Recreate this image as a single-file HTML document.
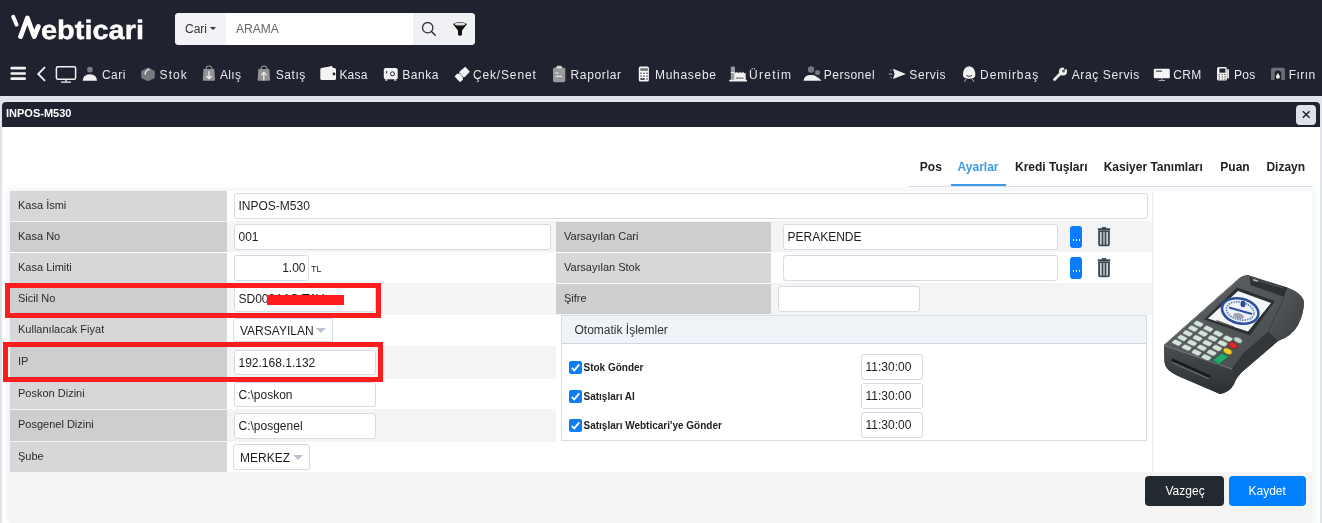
<!DOCTYPE html>
<html><head><meta charset="utf-8"><style>
*{box-sizing:border-box;margin:0;padding:0}
html,body{width:1322px;height:523px;overflow:hidden;background:#e0e3e9;font-family:"Liberation Sans",sans-serif;position:relative}
.a{position:absolute}
.t{position:absolute;white-space:nowrap;line-height:1}
.mi{position:absolute;top:68.5px;font-size:12px;line-height:12px;color:#e9e9ea;white-space:nowrap}
.lab{position:absolute;font-size:11px;line-height:11px;color:#2a2a2a;white-space:nowrap}
.inp{position:absolute;background:#fff;border:1px solid #d5dbe3;border-radius:3px}
.it{position:absolute;font-size:12px;line-height:12px;color:#1e1e1e;white-space:nowrap}
.L1{background:#d7d7da}
.L2{background:#cecdd0}
.G{background:#f4f4f4}
.W{background:#fff}
.tab{position:absolute;top:161px;font-size:12px;line-height:12px;font-weight:bold;color:#222;white-space:nowrap}
.red{position:absolute;border:4.8px solid #ff1c1c}
.cbt{position:absolute;font-size:10px;line-height:10px;font-weight:bold;color:#1e1e1e;white-space:nowrap}
</style></head><body>
<div id="root" style="position:absolute;left:0;top:0;width:1322px;height:523px;overflow:hidden;will-change:transform">
<div class="a" style="left:0px;top:0px;width:1322px;height:96px;background:#20222f"></div>
<svg class="a" style="left:0;top:0" width="160" height="50" viewBox="0 0 160 50">
<path d="M13.2 16.8 L16.6 24.6" stroke="#fff" stroke-width="3.9" stroke-linecap="round" fill="none"/>
<path d="M20.6 36.6 L27.4 18 L34.2 36.6 L38.3 26.5" stroke="#fff" stroke-width="4.8" stroke-linecap="round" stroke-linejoin="round" fill="none"/>
<text x="41" y="38.8" font-family="Liberation Sans" font-weight="bold" font-size="26.5" fill="#fff" stroke="#fff" stroke-width="0.4" textLength="103" lengthAdjust="spacingAndGlyphs" style="text-rendering:geometricPrecision">ebticari</text>
</svg>
<div class="a" style="left:175px;top:13px;width:300px;height:32px;background:#fff;border-radius:4px"></div>
<div class="a" style="left:175px;top:13px;width:51px;height:32px;background:#f2f2f7;border-radius:4px 0 0 4px"></div>
<div class="a" style="left:413px;top:13px;width:62px;height:32px;background:#f0f1f5;border-radius:0 4px 4px 0"></div>
<div class="t" style="left:185px;top:22.6px;font-size:12px;color:#333">Cari</div>
<div class="a" style="left:210px;top:27px;width:0;height:0;border-left:3px solid transparent;border-right:3px solid transparent;border-top:3px solid #333"></div>
<div class="t" style="left:236px;top:23px;font-size:12px;color:#666">ARAMA</div>
<svg class="a" style="left:418px;top:18px" width="24" height="22" viewBox="0 0 24 22">
<circle cx="9.7" cy="9.7" r="5.2" stroke="#333" stroke-width="1.3" fill="none"/>
<path d="M13.5 13.5 L17.2 17.3" stroke="#333" stroke-width="1.5" stroke-linecap="round"/>
</svg>
<svg class="a" style="left:450px;top:19px" width="20" height="20" viewBox="0 0 20 20">
<path d="M3 5 Q10 1 17 5 L12 11.5 L12 16 Q10 17.5 8 16 L8 11.5 Z" fill="#111"/>
<ellipse cx="10" cy="5" rx="5.3" ry="1.6" fill="#ddd"/>
</svg>
<div class="mi" style="left:101.9px;top:68.5px;letter-spacing:0.533px">Cari</div>
<div class="mi" style="left:159.6px;top:68.5px;letter-spacing:1.067px">Stok</div>
<div class="mi" style="left:220px;top:68.5px;letter-spacing:0.333px">Alış</div>
<div class="mi" style="left:275.8px;top:68.5px;letter-spacing:0.525px">Satış</div>
<div class="mi" style="left:339.4px;top:68.5px;letter-spacing:0.200px">Kasa</div>
<div class="mi" style="left:402.3px;top:68.5px;letter-spacing:0.500px">Banka</div>
<div class="mi" style="left:473px;top:68.5px;letter-spacing:0.838px">Çek/Senet</div>
<div class="mi" style="left:570.5px;top:68.5px;letter-spacing:0.643px">Raporlar</div>
<div class="mi" style="left:655px;top:68.5px;letter-spacing:0.700px">Muhasebe</div>
<div class="mi" style="left:749px;top:68.5px;letter-spacing:1.340px">Üretim</div>
<div class="mi" style="left:823.8px;top:68.5px;letter-spacing:0.486px">Personel</div>
<div class="mi" style="left:909.3px;top:68.5px;letter-spacing:0.580px">Servis</div>
<div class="mi" style="left:980px;top:68.5px;letter-spacing:0.971px">Demirbaş</div>
<div class="mi" style="left:1071.7px;top:68.5px;letter-spacing:0.630px">Araç Servis</div>
<div class="mi" style="left:1173.2px;top:68.5px;letter-spacing:0.400px">CRM</div>
<div class="mi" style="left:1234px;top:68.5px;letter-spacing:0.300px">Pos</div>
<div class="mi" style="left:1288.8px;top:68.5px;letter-spacing:0.400px">Fırın</div>
<svg class="a" style="left:0;top:0" width="1322" height="95" viewBox="0 0 1322 95">
<g fill="#f2f2f2">
<rect x="10.4" y="66.8" width="15.6" height="2.6" rx="1.2"/>
<rect x="10.4" y="72.2" width="15.6" height="2.6" rx="1.2"/>
<rect x="10.4" y="77.3" width="15.6" height="2.6" rx="1.2"/>
</g>
<path d="M45 67.2 L38.2 74 L45 80.8" stroke="#f2f2f2" stroke-width="1.8" fill="none"/>
<rect x="56.4" y="66.7" width="19.2" height="12.6" rx="1.5" stroke="#f2f2f2" stroke-width="1.5" fill="none"/>
<path d="M66 79.5 V82 M61 82.2 H71" stroke="#f2f2f2" stroke-width="1.3" fill="none"/>
<circle cx="89.9" cy="69.6" r="2.9" fill="#7b7c84"/>
<path d="M82.7 80.8 Q83 74.5 89.9 74.2 Q96.8 74.5 97 80.8 Z" fill="#f2f2f2"/>
<path d="M148 67.5 L154.8 71 L154.8 78 L148 81.2 L141.2 78 L141.2 71 Z" fill="#77787e"/>
<path d="M145 74.5 Q145 71 149.5 69" stroke="#f2f2f2" stroke-width="1.3" fill="none"/>
<path d="M206 69.5 Q206 66 209 66 Q212 66 212 69.5" stroke="#999" stroke-width="1.2" fill="none"/>
<path d="M203.5 69 H214.3 L215 80 Q215 80.8 214 80.8 H204 Q202.8 80.8 202.8 80 Z" fill="#939396"/>
<path d="M209 71 V78.5 M206.5 76 L209 78.7 L211.5 76" stroke="#f2f2f2" stroke-width="1.2" fill="none"/>
<path d="M261 69.5 Q261 66 264 66 Q267 66 267 69.5" stroke="#999" stroke-width="1.2" fill="none"/>
<path d="M258.3 69 H269.3 L270 80 Q270 80.8 269 80.8 H259 Q257.6 80.8 257.6 80 Z" fill="#939396"/>
<path d="M263.8 80.5 V72.5 M261.3 75 L263.8 72.3 L266.3 75" stroke="#f2f2f2" stroke-width="1.2" fill="none"/>
<path d="M321.5 68 L332 66 L333 68 H334.5 Q336 68 336 69.5 V78.5 Q336 80 334.5 80 H321.8 Q320.3 80 320.3 78.5 V69.5 Q320.3 68 321.5 68 Z" fill="#f4f4f4"/>
<circle cx="334" cy="74" r="1.4" fill="#20222f"/>
<rect x="383.8" y="67.9" width="13.9" height="11.4" rx="1.8" fill="#f4f4f4"/>
<rect x="385" y="79" width="2.5" height="1.8" fill="#bbb"/><rect x="394" y="79" width="2.5" height="1.8" fill="#bbb"/>
<rect x="386.2" y="71" width="0.9" height="2.5" fill="#20222f"/>
<circle cx="392.5" cy="73.8" r="2" stroke="#20222f" stroke-width="1" fill="none"/>
<path d="M465.3 66.7 L469.8 71.8 L464.6 77.2 Q463.2 76.6 462.6 78.2 Q463.5 79.2 462.6 80 L460 82.3 L454.6 76.4 L457.4 73.6 Q458.6 74.4 459.4 73.2 Q459 72.2 459.6 71.6 Z" fill="#f4f4f4"/>
<path d="M459.6 72.8 L463.6 78" stroke="#20222f" stroke-width="0.9" stroke-dasharray="1.2 0.9"/>
<rect x="553" y="67.5" width="12.3" height="14.8" rx="1.8" fill="#9a9a9d"/>
<rect x="556.5" y="65.8" width="5.3" height="2.8" rx="1.2" fill="#d8d8d8"/>
<rect x="555.5" y="72.5" width="3" height="1.1" fill="#eee"/><rect x="555.5" y="75.8" width="6.5" height="1.1" fill="#eee"/>
<rect x="638.8" y="66.4" width="10.1" height="15.1" rx="1.6" fill="#f4f4f4"/>
<rect x="640.3" y="68.3" width="7.6" height="2.5" fill="#6e6e74"/>
<g fill="#7a7a80"><rect x="640.1" y="72.5" width="1.8" height="1.5"/><rect x="643.1" y="72.5" width="1.8" height="1.5"/><rect x="646.1" y="72.5" width="1.8" height="1.5"/>
<rect x="640.1" y="75.4" width="1.8" height="1.5"/><rect x="643.1" y="75.4" width="1.8" height="1.5"/><rect x="646.1" y="75.4" width="1.8" height="1.5"/>
<rect x="646.1" y="78.3" width="1.8" height="1.5"/></g>
<rect x="640.1" y="78.3" width="4.8" height="1.5" rx="0.7" fill="#20222f"/>
<rect x="730.8" y="66.6" width="4.2" height="14" fill="#9c9ca0"/>
<rect x="730.8" y="72" width="4.2" height="1" fill="#f0f0f0"/>
<path d="M734.4 80.6 V73.2 L737.5 71.8 V73.2 L740.6 71.8 V73.2 L743.7 71.8 V73.2 L745.7 73 V80.6 Z" fill="#f2f2f2"/>
<rect x="736" y="77.4" width="7.6" height="1.5" fill="#8a8a90"/>
<rect x="729.2" y="79.8" width="17.8" height="1.7" rx="0.6" fill="#f2f2f2"/>
<circle cx="811" cy="69.5" r="3.2" fill="#75767e"/>
<circle cx="817.5" cy="72.5" r="2.6" fill="#75767e"/>
<path d="M803.6 80.8 Q804 75 811 75 Q818 75 818.4 80.8 Z" fill="#f2f2f2"/>
<path d="M817 76.5 L821.7 80.8 H818.5 Z" fill="#f2f2f2"/>
<path d="M893 68.7 L905.9 74 L893 79.1 L894.6 74 Z" fill="#f2f2f2"/>
<g fill="#888"><rect x="888.8" y="73.3" width="3.5" height="1.4"/><circle cx="891" cy="70.2" r="0.8"/><circle cx="891" cy="77.8" r="0.8"/></g>
<path d="M969.2 66.2 Q975.3 67 975.3 75 Q975.3 78.8 969.2 78.8 Q963 78.8 963 75 Q963 67 969.2 66.2 Z" fill="#f2f2f2"/>
<path d="M966.3 75.5 Q969.2 77.5 972 75.5" stroke="#20222f" stroke-width="0.9" fill="none"/>
<path d="M966 79 L964.5 81.8 M972.3 79 L973.8 81.8" stroke="#bbb" stroke-width="1"/>
<path d="M1054.5 79.5 L1060.5 73.5" stroke="#f2f2f2" stroke-width="2.8" stroke-linecap="round"/>
<circle cx="1063" cy="71.5" r="4" fill="#f2f2f2"/>
<circle cx="1063.5" cy="71" r="1.5" fill="#666"/>
<path d="M1063 66.5 L1066.5 67.5 L1065 70.5" fill="#20222f"/>
<rect x="1153.8" y="68.7" width="16" height="9.5" rx="1" fill="#f4f4f4"/>
<rect x="1156" y="70.6" width="6" height="1" fill="#20222f"/>
<path d="M1161.8 78.2 V80 M1158.5 80.5 H1165" stroke="#aaa" stroke-width="1"/>
<rect x="1217" y="67" width="9.9" height="13.6" rx="1.6" fill="#f2f2f2"/>
<rect x="1219.4" y="68.5" width="6" height="4.2" fill="#20222f"/>
<g fill="#555860"><rect x="1218.6" y="74" width="1.3" height="1.1"/><rect x="1221.6" y="74" width="1.3" height="1.1"/><rect x="1224.3" y="74" width="1.3" height="1.1"/>
<rect x="1218.6" y="76.3" width="1.3" height="1.1"/><rect x="1221.6" y="76.3" width="1.3" height="1.1"/><rect x="1224.3" y="76.3" width="1.3" height="1.1"/>
<rect x="1218.6" y="78.5" width="1.3" height="1.1"/><rect x="1221.6" y="78.5" width="1.3" height="1.1"/><rect x="1224.3" y="78.5" width="1.3" height="1.1"/></g>
<rect x="1227.2" y="69.3" width="1.8" height="9.2" fill="#e6e6e6"/>
<path d="M1271 80 V69.5 Q1271 67.8 1272.7 67.8 H1283.2 Q1284.9 67.8 1284.9 69.5 V80 H1281.3 V73.5 Q1281.3 70.4 1277.95 70.4 Q1274.6 70.4 1274.6 73.5 V80 Z" fill="#6d6d75"/>
<path d="M1277.9 72.9 Q1279.9 75.5 1279.9 77 Q1279.9 78.8 1277.9 78.8 Q1275.9 78.8 1275.9 77 Q1275.9 75.5 1277.9 72.9 Z" fill="#f2f2f2"/>
</svg>

<div class="a" style="left:2px;top:102px;width:1318px;height:421px;background:#fff;border-radius:4px 4px 0 0"></div>
<div class="a" style="left:2px;top:102px;width:1318px;height:25px;background:#20222f;border-radius:4px 4px 0 0"></div>
<div class="t" style="left:6px;top:107.5px;font-size:11px;font-weight:bold;color:#fff">INPOS-M530</div>
<div class="a" style="left:1296px;top:105px;width:20px;height:20px;background:#dee2ea;border-radius:4px"></div>
<svg class="a" style="left:1296px;top:105px" width="20" height="20" viewBox="0 0 20 20">
<path d="M6.8 6.2 L13.6 12.8 M13.6 6.2 L6.8 12.8" stroke="#222" stroke-width="1.5"/>
</svg>
<div class="a" style="left:908px;top:186px;width:405px;height:1px;background:#dde2ea"></div>
<div class="tab" style="left:919.8px;top:161px;color:#222">Pos</div>
<div class="tab" style="left:957.6px;top:161px;color:#3c9be6">Ayarlar</div>
<div class="tab" style="left:1015px;top:161px;color:#222">Kredi Tuşları</div>
<div class="tab" style="left:1103.7px;top:161px;color:#222">Kasiyer Tanımları</div>
<div class="tab" style="left:1220.3px;top:161px;color:#222">Puan</div>
<div class="tab" style="left:1266.4px;top:161px;color:#222">Dizayn</div>
<div class="a" style="left:951px;top:184px;width:55px;height:2px;background:#3c9be6"></div>
<div class="a" style="left:9px;top:191px;width:1303px;height:332px;background:#f4f4f4;box-shadow:0 0 9px rgba(70,90,140,0.13)"></div>
<div class="a" style="left:10px;top:191px;width:1142px;height:281px;background:#fff"></div>
<div class="a" style="left:10px;top:221px;width:546px;height:31px;background:#f4f4f4"></div>
<div class="a" style="left:10px;top:283px;width:546px;height:32px;background:#f4f4f4"></div>
<div class="a" style="left:10px;top:346px;width:546px;height:33px;background:#f4f4f4"></div>
<div class="a" style="left:10px;top:409px;width:546px;height:33px;background:#f4f4f4"></div>
<div class="a" style="left:556px;top:221px;width:596px;height:31px;background:#f4f4f4"></div>
<div class="a" style="left:556px;top:283px;width:596px;height:32px;background:#f4f4f4"></div>
<div class="a" style="left:10px;top:191px;width:217px;height:30px;background:#d7d7da"></div>
<div class="lab" style="left:18px;top:199.5px;">Kasa İsmi</div>
<div class="a" style="left:10px;top:222px;width:217px;height:30px;background:#cecdd0"></div>
<div class="lab" style="left:18px;top:230.5px;">Kasa No</div>
<div class="a" style="left:10px;top:253px;width:217px;height:30px;background:#d7d7da"></div>
<div class="lab" style="left:18px;top:261.5px;">Kasa Limiti</div>
<div class="a" style="left:10px;top:284px;width:217px;height:31px;background:#cecdd0"></div>
<div class="lab" style="left:18px;top:293.0px;">Sicil No</div>
<div class="a" style="left:10px;top:316px;width:217px;height:30px;background:#d7d7da"></div>
<div class="lab" style="left:18px;top:323.7px;">Kullanılacak Fiyat</div>
<div class="a" style="left:10px;top:347px;width:217px;height:32px;background:#cecdd0"></div>
<div class="lab" style="left:18px;top:355.7px;">IP</div>
<div class="a" style="left:10px;top:380px;width:217px;height:29px;background:#d7d7da"></div>
<div class="lab" style="left:18px;top:388.0px;">Poskon Dizini</div>
<div class="a" style="left:10px;top:410px;width:217px;height:31px;background:#cecdd0"></div>
<div class="lab" style="left:18px;top:419.0px;">Posgenel Dizini</div>
<div class="a" style="left:10px;top:442px;width:217px;height:30px;background:#d7d7da"></div>
<div class="lab" style="left:18px;top:450.5px;">Şube</div>
<div class="a" style="left:234px;top:193px;width:914px;height:26px;background:#fff;border:1px solid #d5dbe3;border-radius:3px"></div>
<div class="it" style="left:238.5px;top:200.0px;">INPOS-M530</div>
<div class="a" style="left:234px;top:224px;width:317px;height:26px;background:#fff;border:1px solid #d5dbe3;border-radius:3px"></div>
<div class="it" style="left:238.5px;top:231.0px;">001</div>
<div class="a" style="left:234px;top:255px;width:75px;height:26px;background:#fff;border:1px solid #d5dbe3;border-radius:3px"></div>
<div class="it" style="left:234px;width:71.5px;top:262.0px;text-align:right">1.00</div>
<div class="t" style="left:311px;top:265px;font-size:9px;color:#222">TL</div>
<div class="a" style="left:234px;top:286px;width:142px;height:26px;background:#fff;border:1px solid #d5dbe3;border-radius:3px"></div>
<div class="it" style="left:238.5px;top:293.0px;">SD003A1G/TAV</div>
<div class="a" style="left:267px;top:295px;width:77px;height:10px;background:#ff1c1c"></div>
<div class="a" style="left:233px;top:318px;width:100px;height:24px;background:#fff;border:1px solid #d5dbe3;border-radius:3px 0 0 3px"></div>
<div class="it" style="left:240px;top:324.5px;">VARSAYILAN</div>
<div class="a" style="left:315.5px;top:327.5px;width:0;height:0;border-left:5px solid transparent;border-right:5px solid transparent;border-top:5.5px solid #b9c3d1"></div>
<div class="a" style="left:234px;top:350px;width:142px;height:25px;background:#fff;border:1px solid #d5dbe3;border-radius:3px"></div>
<div class="it" style="left:238.5px;top:356.5px;">192.168.1.132</div>
<div class="a" style="left:234px;top:382px;width:142px;height:25px;background:#fff;border:1px solid #d5dbe3;border-radius:3px"></div>
<div class="it" style="left:238.5px;top:388.5px;">C:\poskon</div>
<div class="a" style="left:234px;top:413px;width:142px;height:26px;background:#fff;border:1px solid #d5dbe3;border-radius:3px"></div>
<div class="it" style="left:238.5px;top:420.0px;">C:\posgenel</div>
<div class="a" style="left:233px;top:444px;width:77px;height:26px;background:#fff;border:1px solid #d5dbe3;border-radius:3px"></div>
<div class="it" style="left:240px;top:451.5px;">MERKEZ</div>
<div class="a" style="left:292.5px;top:454.5px;width:0;height:0;border-left:5.3px solid transparent;border-right:5.3px solid transparent;border-top:5.3px solid #b9c3d1"></div>
<div class="a" style="left:556px;top:222px;width:215px;height:30px;background:#cecdd0"></div>
<div class="lab" style="left:564px;top:230.5px;">Varsayılan Cari</div>
<div class="a" style="left:556px;top:253px;width:215px;height:30px;background:#d7d7da"></div>
<div class="lab" style="left:564px;top:261.5px;">Varsayılan Stok</div>
<div class="a" style="left:556px;top:284px;width:215px;height:30px;background:#cecdd0"></div>
<div class="lab" style="left:564px;top:292.5px;">Şifre</div>
<div class="a" style="left:783px;top:224px;width:275px;height:26px;background:#fff;border:1px solid #d5dbe3;border-radius:3px"></div>
<div class="it" style="left:787.5px;top:231.0px;">PERAKENDE</div>
<div class="a" style="left:783px;top:255px;width:275px;height:26px;background:#fff;border:1px solid #d5dbe3;border-radius:3px"></div>
<div class="a" style="left:778px;top:286px;width:142px;height:26px;background:#fff;border:1px solid #d5dbe3;border-radius:3px"></div>
<div class="a" style="left:1070px;top:226px;width:12px;height:22px;background:#0a7cff;border-radius:3px"></div>
<div class="a" style="left:1072.5px;top:239px;width:1.900000000000091px;height:1.9000000000000057px;background:#fff"></div>
<div class="a" style="left:1075.5px;top:239px;width:1.900000000000091px;height:1.9000000000000057px;background:#fff"></div>
<div class="a" style="left:1078.5px;top:239px;width:1.900000000000091px;height:1.9000000000000057px;background:#fff"></div>
<svg class="a" style="left:1096px;top:226px" width="16" height="22" viewBox="0 0 16 22">
<rect x="1.8" y="2.2" width="12.4" height="2.2" rx="0.6" fill="#3d4852"/>
<rect x="5.8" y="1" width="4.4" height="2" rx="0.8" fill="#3d4852"/>
<path d="M2.2 4.6 H13.8 V18.6 Q13.8 20.2 12.2 20.2 H3.8 Q2.2 20.2 2.2 18.6 Z" fill="#3d4852"/>
<rect x="4" y="6" width="1.7" height="12.6" fill="#c9d0d6"/>
<rect x="7.15" y="6" width="1.7" height="12.6" fill="#a9b1b8"/>
<rect x="10.3" y="6" width="1.7" height="12.6" fill="#c9d0d6"/>
</svg>
<div class="a" style="left:1070px;top:257px;width:12px;height:22px;background:#0a7cff;border-radius:3px"></div>
<div class="a" style="left:1072.5px;top:270px;width:1.900000000000091px;height:1.8999999999999773px;background:#fff"></div>
<div class="a" style="left:1075.5px;top:270px;width:1.900000000000091px;height:1.8999999999999773px;background:#fff"></div>
<div class="a" style="left:1078.5px;top:270px;width:1.900000000000091px;height:1.8999999999999773px;background:#fff"></div>
<svg class="a" style="left:1096px;top:257px" width="16" height="22" viewBox="0 0 16 22">
<rect x="1.8" y="2.2" width="12.4" height="2.2" rx="0.6" fill="#3d4852"/>
<rect x="5.8" y="1" width="4.4" height="2" rx="0.8" fill="#3d4852"/>
<path d="M2.2 4.6 H13.8 V18.6 Q13.8 20.2 12.2 20.2 H3.8 Q2.2 20.2 2.2 18.6 Z" fill="#3d4852"/>
<rect x="4" y="6" width="1.7" height="12.6" fill="#c9d0d6"/>
<rect x="7.15" y="6" width="1.7" height="12.6" fill="#a9b1b8"/>
<rect x="10.3" y="6" width="1.7" height="12.6" fill="#c9d0d6"/>
</svg>
<div class="a" style="left:561px;top:315px;width:586px;height:126px;background:#fff;border:1px solid #d7dde6"></div>
<div class="a" style="left:562px;top:316px;width:584px;height:28px;background:#f0f3f7;border-bottom:1px solid #cfd6e1"></div>
<div class="t" style="left:574.5px;top:324px;font-size:12px;color:#333">Otomatik İşlemler</div>
<svg class="a" style="left:568.5px;top:361px" width="13" height="13" viewBox="0 0 13 13">
<rect x="0" y="0" width="13" height="13" rx="2" fill="#0d7ff2"/>
<path d="M2.8 6.8 L5.3 9.3 L10.3 3.3" stroke="#fff" stroke-width="1.8" fill="none"/>
</svg>
<div class="cbt" style="left:583.5px;top:363px;">Stok Gönder</div>
<svg class="a" style="left:568.5px;top:390px" width="13" height="13" viewBox="0 0 13 13">
<rect x="0" y="0" width="13" height="13" rx="2" fill="#0d7ff2"/>
<path d="M2.8 6.8 L5.3 9.3 L10.3 3.3" stroke="#fff" stroke-width="1.8" fill="none"/>
</svg>
<div class="cbt" style="left:583.5px;top:392px;">Satışları Al</div>
<svg class="a" style="left:568.5px;top:419.4px" width="13" height="13" viewBox="0 0 13 13">
<rect x="0" y="0" width="13" height="13" rx="2" fill="#0d7ff2"/>
<path d="M2.8 6.8 L5.3 9.3 L10.3 3.3" stroke="#fff" stroke-width="1.8" fill="none"/>
</svg>
<div class="cbt" style="left:583.5px;top:421.4px;">Satışları Webticari'ye Gönder</div>
<div class="a" style="left:861px;top:354px;width:62px;height:26px;background:#fff;border:1px solid #d5dbe3;border-radius:3px"></div>
<div class="it" style="left:865.5px;top:361.0px;">11:30:00</div>
<div class="a" style="left:861px;top:383px;width:62px;height:26px;background:#fff;border:1px solid #d5dbe3;border-radius:3px"></div>
<div class="it" style="left:865.5px;top:390.0px;">11:30:00</div>
<div class="a" style="left:861px;top:412px;width:62px;height:26px;background:#fff;border:1px solid #d5dbe3;border-radius:3px"></div>
<div class="it" style="left:865.5px;top:419.0px;">11:30:00</div>
<div class="a" style="left:1152px;top:191px;width:160px;height:281px;background:#fff;border-left:1px solid #e9eaee"></div>
<svg class="a" style="left:1155px;top:265px" width="155" height="135" viewBox="1155 265 155 135">
<defs><linearGradient id="gf" x1="0" y1="0" x2="1" y2="1"><stop offset="0" stop-color="#5f6365"/><stop offset="1" stop-color="#474b4d"/></linearGradient><linearGradient id="gs" x1="0" y1="0" x2="0" y2="1"><stop offset="0" stop-color="#4a4e50"/><stop offset="1" stop-color="#2c2f31"/></linearGradient><linearGradient id="gr" x1="0" y1="0" x2="1" y2="1"><stop offset="0" stop-color="#5a5e60"/><stop offset="1" stop-color="#3a3e40"/></linearGradient></defs>
<path d="M1164 345 L1239 278.5 Q1243 275 1248 275 L1287 287.5 Q1301 292 1303.8 301 Q1304.5 312 1298 325 Q1292 336 1278 341 L1242 372 Q1236 378 1234 384 Q1230 392 1220 394 L1178 376 Q1165 370 1164.5 362 Z" fill="#3b3f41"/>
<path d="M1284 287 Q1301 292 1303.8 301 Q1304.5 312 1298 325 Q1292 336 1278 341 L1268 331 L1284 297 Z" fill="url(#gr)"/>
<path d="M1284 297 L1268 331" stroke="#2c2f31" stroke-width="1"/>
<path d="M1244 352 L1268 331 L1278 341 L1242 372 Q1236 378 1234 384 L1232 368.5 Z" fill="#34373a"/>
<path d="M1244 352 L1268 331" stroke="#62666a" stroke-width="0.8"/>
<path d="M1164 345 L1232 368.5 L1234 384 Q1230 392 1220 394 L1178 376 Q1165 370 1164.5 362 Z" fill="url(#gs)"/>
<path d="M1164 345 L1239 278.5 Q1243 275 1248 276 L1284 287 L1284 297 L1268 331 L1244 352 L1232 368.5 Z" fill="url(#gf)"/>
<path d="M1164.5 345.5 L1232 369" stroke="#74787a" stroke-width="1.2"/>
<path d="M1164.5 345 L1239 278.8" stroke="#7c8082" stroke-width="0.9"/>
<path d="M1249.5 277.2 L1287.3 287.5 L1283.9 296.7 L1250.6 285.2 Z" fill="#2e3133"/>
<path d="M1252 279 L1284 288" stroke="#55595b" stroke-width="1"/>
<rect x="1253" y="279.5" width="5" height="1.6" fill="#aaa" transform="rotate(16 1255 280)"/>
<path d="M1204 319.5 L1237 287.5 L1275 301 L1250 335.5 Z" fill="#2d3032"/>
<path d="M1208 318.5 L1238 291 L1271 303 L1248 331.5 Z" fill="#f3f4f5"/>
<ellipse cx="1240.2" cy="311" rx="18.5" ry="12.3" transform="rotate(14 1240.2 311)" fill="#eef2f8" stroke="#2d50a0" stroke-width="2.6"/>
<ellipse cx="1240.2" cy="311" rx="14" ry="8.8" transform="rotate(14 1240.2 311)" fill="none" stroke="#5f7fc0" stroke-width="1.6" stroke-dasharray="1.5 1"/>
<path d="M1229 307.5 L1252 314" stroke="#2d50a0" stroke-width="2"/>
<ellipse cx="1238.5" cy="316" rx="5.5" ry="2.8" transform="rotate(14 1238.5 316)" fill="#a0a4aa"/>
<ellipse cx="1243" cy="304" rx="2.5" ry="3.2" fill="#2a4d9c"/>
<path d="M1216.5 320.5 L1234 327" stroke="#555" stroke-width="1.2"/>
<rect x="-4.4" y="-2.6" width="8.8" height="5.2" rx="1.7" transform="translate(1176.9 342.7) rotate(26) skewX(-18)" fill="#d3e2db" stroke="#5f6b66" stroke-width="0.7"/>
<rect x="-4.4" y="-2.6" width="8.8" height="5.2" rx="1.7" transform="translate(1186.7 347.6) rotate(26) skewX(-18)" fill="#d3e2db" stroke="#5f6b66" stroke-width="0.7"/>
<rect x="-4.4" y="-2.6" width="8.8" height="5.2" rx="1.7" transform="translate(1196.5 352.5) rotate(26) skewX(-18)" fill="#d3e2db" stroke="#5f6b66" stroke-width="0.7"/>
<rect x="-4.4" y="-2.6" width="8.8" height="5.2" rx="1.7" transform="translate(1206.3 357.4) rotate(26) skewX(-18)" fill="#d3e2db" stroke="#5f6b66" stroke-width="0.7"/>
<rect x="-4.4" y="-2.6" width="8.8" height="5.2" rx="1.7" transform="translate(1182.3 338.0) rotate(26) skewX(-18)" fill="#d3e2db" stroke="#5f6b66" stroke-width="0.7"/>
<rect x="-4.4" y="-2.6" width="8.8" height="5.2" rx="1.7" transform="translate(1192.1 342.9) rotate(26) skewX(-18)" fill="#d3e2db" stroke="#5f6b66" stroke-width="0.7"/>
<rect x="-4.4" y="-2.6" width="8.8" height="5.2" rx="1.7" transform="translate(1201.9 347.8) rotate(26) skewX(-18)" fill="#d3e2db" stroke="#5f6b66" stroke-width="0.7"/>
<rect x="-4.4" y="-2.6" width="8.8" height="5.2" rx="1.7" transform="translate(1211.7 352.7) rotate(26) skewX(-18)" fill="#d3e2db" stroke="#5f6b66" stroke-width="0.7"/>
<rect x="-4.4" y="-2.6" width="8.8" height="5.2" rx="1.7" transform="translate(1187.7 333.3) rotate(26) skewX(-18)" fill="#d3e2db" stroke="#5f6b66" stroke-width="0.7"/>
<rect x="-4.4" y="-2.6" width="8.8" height="5.2" rx="1.7" transform="translate(1197.5 338.2) rotate(26) skewX(-18)" fill="#d3e2db" stroke="#5f6b66" stroke-width="0.7"/>
<rect x="-4.4" y="-2.6" width="8.8" height="5.2" rx="1.7" transform="translate(1207.3 343.1) rotate(26) skewX(-18)" fill="#d3e2db" stroke="#5f6b66" stroke-width="0.7"/>
<rect x="-4.4" y="-2.6" width="8.8" height="5.2" rx="1.7" transform="translate(1217.1 348.0) rotate(26) skewX(-18)" fill="#d3e2db" stroke="#5f6b66" stroke-width="0.7"/>
<rect x="-4.4" y="-2.6" width="8.8" height="5.2" rx="1.7" transform="translate(1193.1 328.6) rotate(26) skewX(-18)" fill="#d3e2db" stroke="#5f6b66" stroke-width="0.7"/>
<rect x="-4.4" y="-2.6" width="8.8" height="5.2" rx="1.7" transform="translate(1202.9 333.5) rotate(26) skewX(-18)" fill="#d3e2db" stroke="#5f6b66" stroke-width="0.7"/>
<rect x="-4.4" y="-2.6" width="8.8" height="5.2" rx="1.7" transform="translate(1212.7 338.4) rotate(26) skewX(-18)" fill="#d3e2db" stroke="#5f6b66" stroke-width="0.7"/>
<rect x="-4.4" y="-2.6" width="8.8" height="5.2" rx="1.7" transform="translate(1222.5 343.3) rotate(26) skewX(-18)" fill="#d3e2db" stroke="#5f6b66" stroke-width="0.7"/>
<rect x="-4.4" y="-2.6" width="8.8" height="5.2" rx="1.7" transform="translate(1198.5 323.9) rotate(26) skewX(-18)" fill="#d3e2db" stroke="#5f6b66" stroke-width="0.7"/>
<rect x="-4.4" y="-2.6" width="8.8" height="5.2" rx="1.7" transform="translate(1208.3 328.8) rotate(26) skewX(-18)" fill="#d3e2db" stroke="#5f6b66" stroke-width="0.7"/>
<rect x="-4.4" y="-2.6" width="8.8" height="5.2" rx="1.7" transform="translate(1218.1 333.7) rotate(26) skewX(-18)" fill="#d3e2db" stroke="#5f6b66" stroke-width="0.7"/>
<rect x="-4.4" y="-2.6" width="8.8" height="5.2" rx="1.7" transform="translate(1227.9 338.6) rotate(26) skewX(-18)" fill="#d3e2db" stroke="#5f6b66" stroke-width="0.7"/>
<ellipse cx="1238" cy="340.1" rx="4.4" ry="2.5" transform="rotate(24 1238 340.1)" fill="#c5d2cc" stroke="#6f7b76" stroke-width="0.6"/>
<ellipse cx="1232.9" cy="345.3" rx="4.6" ry="2.8" transform="rotate(24 1232.9 345.3)" fill="#dc2a2e" stroke="#7a1515" stroke-width="0.6"/>
<ellipse cx="1227.7" cy="351.3" rx="4.6" ry="2.8" transform="rotate(24 1227.7 351.3)" fill="#eccf2a" stroke="#7a6a10" stroke-width="0.6"/>
<path d="M1212.5 360 L1222 353 L1228.5 356.5 L1219 364.5 Z" fill="#22a86a" stroke="#0e5a36" stroke-width="0.6"/>
<path d="M1172.6 359.9 L1209.6 376.3" stroke="#17191a" stroke-width="2.4" stroke-linecap="round"/>
<path d="M1172.3 362.6 L1209 379" stroke="#7d8183" stroke-width="0.8"/>
</svg>
<div class="a" style="left:1145px;top:476px;width:79px;height:30px;background:#232a2f;border-radius:4px"></div>
<div class="t" style="left:1165.5px;top:485px;font-size:12px;color:#fff">Vazgeç</div>
<div class="a" style="left:1229px;top:476px;width:77px;height:30px;background:#0080ff;border-radius:4px"></div>
<div class="t" style="left:1248.5px;top:485px;font-size:12px;color:#fff">Kaydet</div>
<div class="a" style="left:5px;top:283px;width:376px;height:35px;border:5px solid #ff1c1c"></div>
<div class="a" style="left:3px;top:342px;width:380px;height:40px;border:5px solid #ff1c1c"></div>
</div>
</body></html>
